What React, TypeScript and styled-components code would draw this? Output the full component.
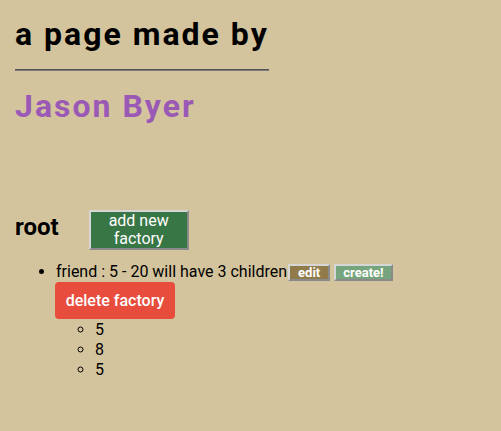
import React from "react";
import styled, { createGlobalStyle } from "styled-components";

const Global = createGlobalStyle`
  html, body { margin: 0; padding: 0; background: #d4c49e; }
  body { font-family: Roboto, "Liberation Sans", sans-serif; color: #000; }
`;

const Page = styled.div`
  padding: 16px 15px 0 15px;
  min-height: 431px;
  box-sizing: border-box;
`;

const Header = styled.header`
  display: inline-block;
`;

const Title = styled.h1`
  margin: 0;
  font-size: 32px;
  line-height: 37px;
  font-weight: 700;
  letter-spacing: 2px;
`;

const Rule = styled.hr`
  margin: 16px 0 0 0;
  border: none;
  border-top: 1px solid #555;
  border-bottom: 1px solid #7a7a7a;
  height: 0;
`;

const Name = styled.h2`
  margin: 17px 0 0 0;
  font-size: 32px;
  line-height: 37px;
  font-weight: 700;
  letter-spacing: 2px;
  color: #9b59b6;
`;

const RootRow = styled.div`
  display: flex;
  align-items: center;
  gap: 30px;
  margin-top: 85px;
`;

const RootLabel = styled.span`
  font-size: 24px;
  font-weight: 700;
  padding-bottom: 6px;
`;

const OutsetButton = styled.button<{ $bg: string }>`
  font-family: Roboto, "Liberation Sans", sans-serif;
  background: ${(p) => p.$bg};
  color: #fff;
  border: 2px solid;
  border-color: #d6d6d6 #8a8a8a #8a8a8a #d6d6d6;
  cursor: pointer;
`;

const AddButton = styled(OutsetButton)`
  width: 100px;
  height: 40px;
  font-size: 16px;
  line-height: 18px;
  padding: 0 6px;
`;

const SmallButton = styled(OutsetButton)<{ $gap: number; $pad: number }>`
  font-size: 13px;
  font-weight: 700;
  height: 17px;
  line-height: 13px;
  padding: 0 ${(p) => p.$pad}px;
  margin-left: ${(p) => p.$gap}px;
`;

const FactoryList = styled.ul`
  margin: 12px 0 0 0;
  padding-left: 41px;
  font-size: 16px;
  line-height: 20px;
`;

const FactoryItem = styled.li`
  list-style: disc;
`;

const ItemLine = styled.div`
  display: flex;
  align-items: center;
`;

const DeleteButton = styled.button`
  display: block;
  margin-left: -1px;
  font-family: Roboto, "Liberation Sans", sans-serif;
  font-size: 16px;
  font-weight: 500;
  color: #fff;
  background: #e74c3c;
  border: none;
  border-radius: 4px;
  width: 120px;
  height: 37px;
  cursor: pointer;
`;

const ChildList = styled.ul`
  margin: 1px 0 0 0;
  padding-left: 39px;
`;

const ChildItem = styled.li`
  list-style: circle;
`;

export default function App() {
  const children = [5, 8, 5];
  return (
    <Page>
      <Global />
      <Header>
        <Title>a page made by</Title>
        <Rule />
        <Name>Jason Byer</Name>
      </Header>
      <RootRow>
        <RootLabel>root</RootLabel>
        <AddButton $bg="#397645">add new factory</AddButton>
      </RootRow>
      <FactoryList>
        <FactoryItem>
          <ItemLine>
            friend : 5 - 20 will have 3 children
            <SmallButton $bg="#917b4b" $gap={1} $pad={8}>edit</SmallButton>
            <SmallButton $bg="#76a47c" $gap={4} $pad={7}>create!</SmallButton>
          </ItemLine>
          <DeleteButton>delete factory</DeleteButton>
          <ChildList>
            {children.map((c, i) => (
              <ChildItem key={i}>{c}</ChildItem>
            ))}
          </ChildList>
        </FactoryItem>
      </FactoryList>
    </Page>
  );
}
